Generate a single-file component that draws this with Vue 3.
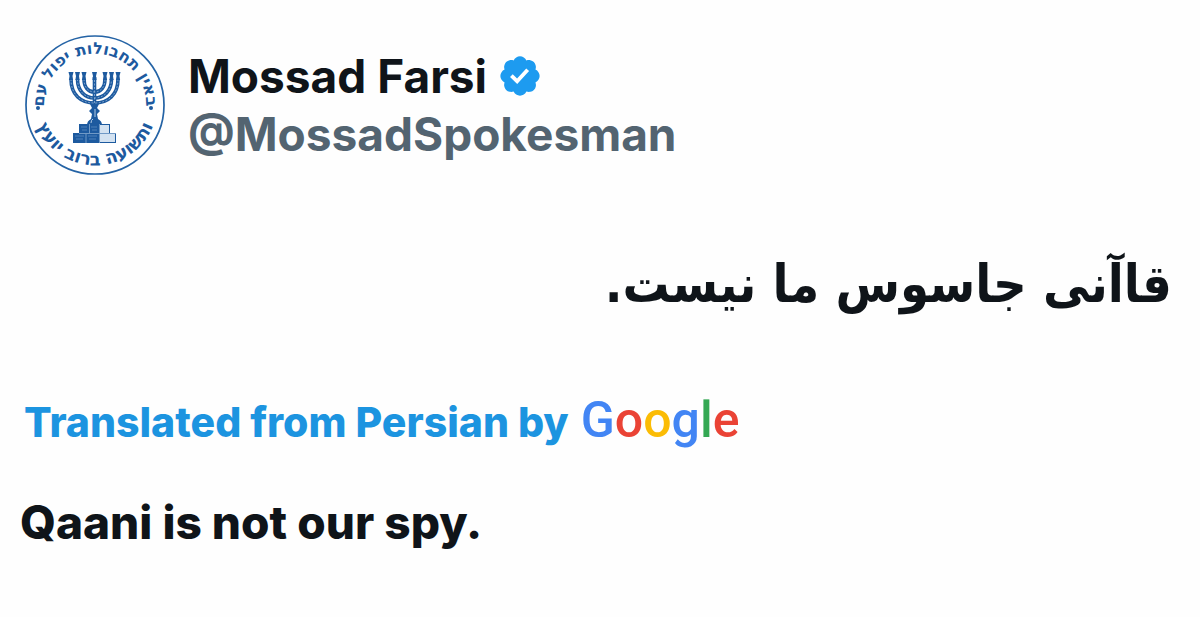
<script setup>
const arms = [
  'M47 45C47 61 57 69 70.500 69S94 61 94 45',
  'M53.500 45C53.500 57 61 64 70.500 64S87.500 57 87.500 45',
  'M60 45C60 53 64 58 70.500 58S81 53 81 45',
]
const cups = [47, 53.5, 60, 70.5, 81, 87.5, 94]
const wordmark = [
  { letter: 'G', tone: 'blue' },
  { letter: 'o', tone: 'red' },
  { letter: 'o', tone: 'yellow' },
  { letter: 'g', tone: 'blue' },
  { letter: 'l', tone: 'green' },
  { letter: 'e', tone: 'red' },
]
</script>

<template>
  <article class="post">
    <header class="author">
      <svg class="emblem" viewBox="0 0 142 142" role="img" aria-label="Mossad emblem">
        <defs>
          <path id="ring-top" d="M30 101A51 51 0 1 1 112 101" />
          <path id="ring-bottom" d="M9 61A62.500 62.500 0 1 0 133 61" />
        </defs>
        <circle cx="71" cy="71" r="69" fill="#fff" stroke="#2463a5" stroke-width="1.700" />
        <g class="motto">
          <text class="motto-top" text-anchor="middle">
            <textPath href="#ring-top" startOffset="50%">באין תחבולות יפול עם</textPath>
          </text>
          <text class="motto-bottom" text-anchor="middle">
            <textPath href="#ring-bottom" startOffset="50%">ותשועה ברוב יועץ</textPath>
          </text>
        </g>
        <g fill="#1d5a9f">
          <circle cx="14" cy="74" r="2" />
          <circle cx="127" cy="74" r="2" />
        </g>
        <g fill="none" stroke="#1d5a9f" stroke-width="3.600">
          <path v-for="d in arms" :key="d" :d="d" />
          <path d="M70.500 43V72" />
        </g>
        <g fill="none" stroke="#9dbbdc" stroke-width="0.700" stroke-dasharray="2 1.500">
          <path v-for="d in arms" :key="d" :d="d" />
          <path d="M70.500 46V70" />
        </g>
        <g fill="#1d5a9f">
          <path v-for="x in cups" :key="x" :d="`M${x - 2.5} 38h5l-1 4 .6 4h-4.200l.6-4z`" />
          <path d="M66 70h9l-2 4 3 3-3 3 1 5q4 2 4 6H63q0-4 4-6l1-5-3-3 3-3z" />
          <path d="M55 90h31v9h6v10H49V99h6z" />
        </g>
        <path d="M69 85q-2 1-2 4M71 75v8" fill="none" stroke="#b4cce5" />
        <path d="M76 91h9v8h-9zM76 100h15v8H76z" fill="#d3e2f1" />
        <path d="M55 99.500h37M65.500 90v9M75.500 90v9M62 100v9M75.500 100v9" fill="none" stroke="#85a9d0" stroke-width="0.800" />
        <path d="M57 93h6M67 93h6M51 102h9M64 102h9M58 96h5M68 96h5M52 105h7M65 105h7" fill="none" stroke="#5b8bc0" stroke-width="0.800" />
      </svg>
      <div class="names">
        <h1 class="name">
          Mossad Farsi
          <svg class="badge" viewBox="0 0 22 22" role="img" aria-label="Verified account">
            <path fill="#1d9bf0" d="M20.396 11c-.018-.646-.215-1.275-.57-1.816-.354-.54-.852-.972-1.438-1.246.223-.607.270-1.264.140-1.897-.131-.634-.437-1.218-.882-1.687-.470-.445-1.053-.750-1.687-.882-.633-.130-1.290-.083-1.897.140-.273-.587-.704-1.086-1.245-1.440S11.647 1.620 11 1.604c-.646.017-1.273.213-1.813.568s-.969.854-1.240 1.440c-.608-.223-1.267-.272-1.902-.140-.635.130-1.220.436-1.690.882-.445.470-.749 1.055-.878 1.688-.130.633-.080 1.290.144 1.896-.587.274-1.087.705-1.443 1.245-.356.540-.555 1.170-.574 1.817.020.647.218 1.276.574 1.817.356.540.856.972 1.443 1.245-.224.606-.274 1.263-.144 1.896.130.634.433 1.218.877 1.688.470.443 1.054.747 1.687.878.633.132 1.290.084 1.897-.136.274.586.705 1.084 1.246 1.439.540.354 1.170.551 1.816.569.647-.016 1.276-.213 1.817-.567s.972-.854 1.245-1.440c.604.239 1.266.296 1.903.164.636-.132 1.220-.447 1.680-.907.460-.460.776-1.044.908-1.681s.075-1.299-.165-1.903c.586-.274 1.084-.705 1.439-1.246.354-.540.551-1.170.569-1.816z" />
            <path fill="#fff" d="M9.662 14.850l-3.429-3.428 1.293-1.302 2.072 2.072 4.400-4.794 1.347 1.246z" />
          </svg>
        </h1>
        <p class="handle">@MossadSpokesman</p>
      </div>
    </header>

    <p class="original" lang="fa" dir="rtl">قاآنی جاسوس ما نیست.</p>

    <p class="source">
      Translated from Persian by
      <span class="google"><span v-for="(part, i) in wordmark" :key="i" :class="part.tone">{{ part.letter }}</span></span>
    </p>

    <p class="translation">Qaani is not our spy.</p>
  </article>
</template>

<style>
body {
  margin: 0;
  background: #fefefe;
}
</style>

<style scoped>
.post {
  padding: 34px 28px 34px 20px;
  color: #0f1419;
  font-family: Inter, "Liberation Sans", sans-serif;
  font-weight: 800;
}

p,
h1 {
  margin: 0;
}

.author {
  display: flex;
  align-items: center;
  gap: 22px;
  padding-left: 4px;
}

.emblem {
  flex: none;
  width: 142px;
  height: 142px;
}

.motto {
  fill: #1d5a9f;
  font-family: "DejaVu Sans", sans-serif;
  font-weight: 700;
}

.motto-top {
  font-size: 16px;
}

.motto-bottom {
  font-size: 18px;
}

.name {
  display: flex;
  align-items: center;
  gap: 10px;
  font-size: 46px;
  font-weight: 700;
  line-height: 58px;
  white-space: nowrap;
}

.badge {
  width: 46px;
  height: 46px;
}

.handle {
  color: #536471;
  font-size: 46px;
  font-weight: 700;
  line-height: 58px;
}

.original {
  margin-top: 64px;
  font-family: "DejaVu Sans Condensed", "DejaVu Sans", sans-serif;
  font-size: 52px;
  line-height: 88px;
}

.source {
  display: flex;
  align-items: baseline;
  gap: 12px;
  margin-top: 60px;
  padding-left: 4px;
  color: #1c94e0;
  font-size: 41px;
  line-height: 64px;
}

.google {
  font-family: Roboto, sans-serif;
  font-size: 50px;
  font-weight: 500;
}

.blue {
  color: #4285f4;
}

.red {
  color: #ea4335;
}

.yellow {
  color: #fbbc05;
}

.green {
  color: #34a853;
}

.translation {
  margin-top: 36px;
  font-size: 46px;
  line-height: 64px;
}
</style>
